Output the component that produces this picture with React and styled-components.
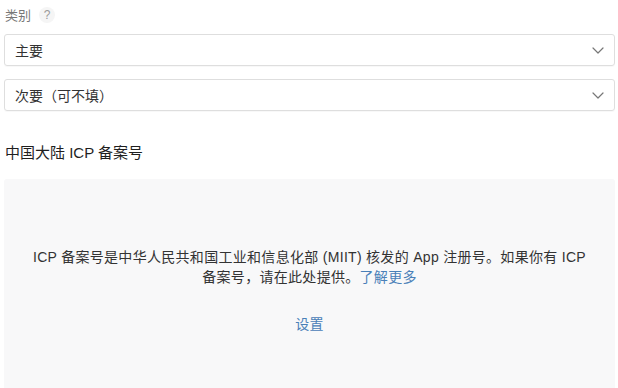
import React from 'react'
import styled, { createGlobalStyle } from 'styled-components'

const GlobalStyle = createGlobalStyle`
  body {
    margin: 0;
    background: #fff;
    font-family: "Liberation Sans", "Noto Sans CJK SC", sans-serif;
    color: #333;
  }
`

const Page = styled.div`
  width: 618px;
  height: 388px;
  overflow: hidden;
  padding: 4px 3px 0 4px;
  box-sizing: border-box;
`

const FieldLabel = styled.div`
  display: flex;
  align-items: center;
  gap: 8px;
  height: 20px;
  padding-left: 1px;
  font-size: 13px;
  color: #777;
`

const Help = styled.span`
  display: inline-flex;
  align-items: center;
  justify-content: center;
  width: 16px;
  height: 16px;
  margin-top: 2px;
  border-radius: 50%;
  background: #f5f5f5;
  color: #9a9a9a;
  font-size: 12px;
`

const SelectList = styled.div`
  display: flex;
  flex-direction: column;
  gap: 13px;
  margin-top: 10px;
`

const Select = styled.div`
  display: flex;
  align-items: center;
  justify-content: space-between;
  height: 32px;
  box-sizing: border-box;
  padding: 0 10px 0 10px;
  border: 1px solid #dedede;
  border-radius: 3px;
  box-shadow: 0 1px 1px rgba(0, 0, 0, 0.03);
  font-size: 14px;
  color: #333;
`

const Chevron = () => (
  <svg width="12" height="7" viewBox="0 0 12 7" fill="none">
    <path d="M1 1l5 5 5-5" stroke="#777" strokeWidth="1.2" strokeLinecap="round" strokeLinejoin="round" />
  </svg>
)

const SectionTitle = styled.h3`
  margin: 32px 0 0 1px;
  font-size: 15px;
  line-height: 20px;
  font-weight: 400;
  color: #1f1f1f;
`

const EmptyBox = styled.div`
  margin-top: 16px;
  height: 240px;
  padding: 68px 22px 0;
  box-sizing: border-box;
  background: #f8f8f9;
  border-radius: 3px;
  text-align: center;
`

const Info = styled.p`
  margin: 0;
  font-size: 14px;
  line-height: 20px;
  letter-spacing: 0.3px;
  color: #333;
`

const Link = styled.a`
  color: #4a80b8;
  text-decoration: none;
  cursor: pointer;
`

const SetupLink = styled(Link)`
  display: inline-block;
  margin-top: 27px;
  font-size: 14px;
  line-height: 20px;
  letter-spacing: 0.3px;
`

export default function App() {
  return (
    <>
      <GlobalStyle />
      <Page>
        <FieldLabel>
          类别 <Help>?</Help>
        </FieldLabel>
        <SelectList>
          <Select>
            主要 <Chevron />
          </Select>
          <Select>
            次要（可不填） <Chevron />
          </Select>
        </SelectList>
        <SectionTitle>中国大陆 ICP 备案号</SectionTitle>
        <EmptyBox>
          <Info>
            ICP 备案号是中华人民共和国工业和信息化部 (MIIT) 核发的 App 注册号。如果你有 ICP
            备案号，请在此处提供。<Link>了解更多</Link>
          </Info>
          <SetupLink>设置</SetupLink>
        </EmptyBox>
      </Page>
    </>
  )
}
